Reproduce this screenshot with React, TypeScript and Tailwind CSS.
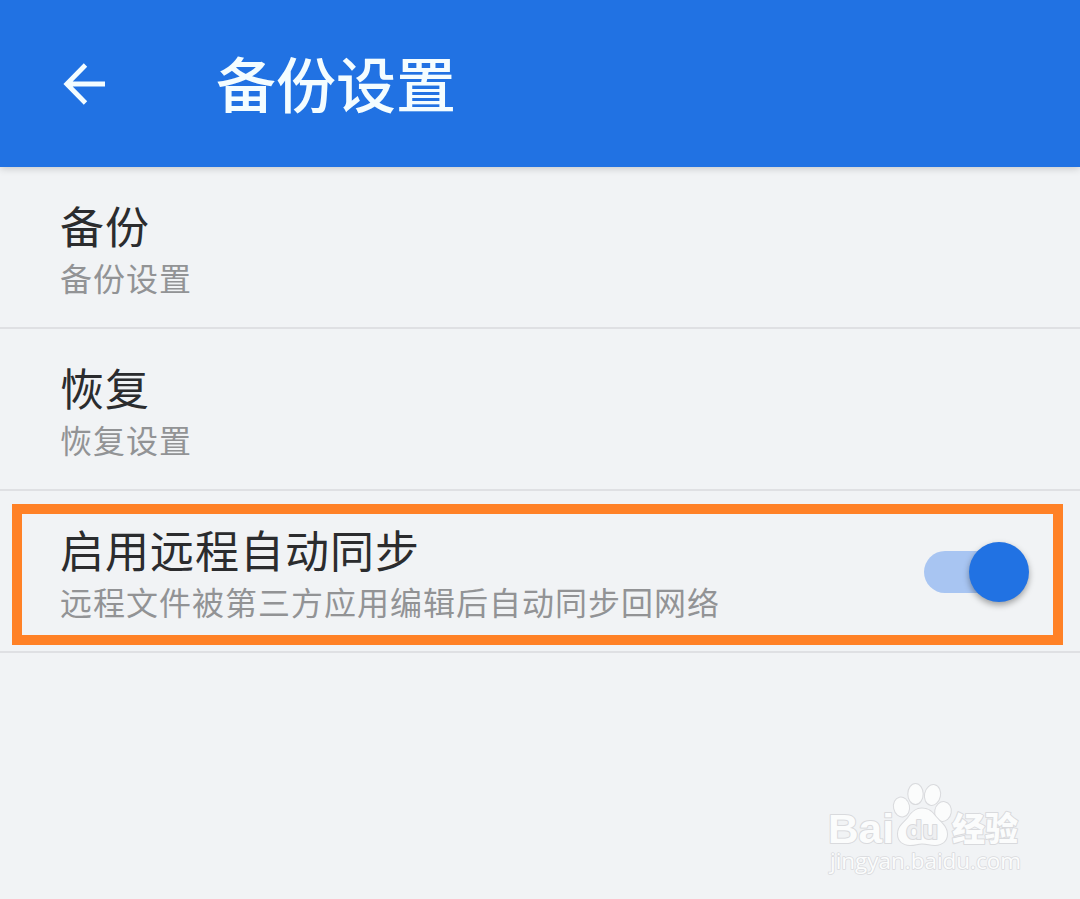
import type { ReactNode } from 'react';

type RowProps = {
  title: string;
  summary: string;
  children?: ReactNode;
};

function Header() {
  return (
    <header className="relative z-10 flex h-[167px] items-center bg-[#2172e3] pl-[63px] text-[#f4fdff] shadow-[0_1px_8px_rgba(0,0,0,0.2)]">
      <svg width="43" height="44" viewBox="0 0 43 44" fill="none" stroke="currentColor" strokeWidth="4.8">
        <path d="M42 22H5M22.5 3L3.8 22L22.5 41" />
      </svg>
      <h1 className="ml-[110px] pb-1 text-[60px] leading-[80px] font-medium">备份设置</h1>
    </header>
  );
}

function Switch() {
  return (
    <div className="mt-[2px] flex h-[60px] w-[105px] items-center">
      <div className="flex h-[42px] w-[95px] items-center rounded-full bg-[#a8c5f2] pl-[45px]">
        <div className="size-[60px] shrink-0 rounded-full bg-[#2172e3] shadow-[0_3px_6px_rgba(0,0,0,0.35)]" />
      </div>
    </div>
  );
}

function Row({ title, summary, children }: RowProps) {
  return (
    <div className="flex h-[162px] items-center justify-between border-b-2 border-[#dfe0e3] pr-[51px] pl-[60px]">
      <div className="pt-[7px]">
        <div className="text-[44px] leading-[54px] tracking-[1px] text-[#2b2c2e]">{title}</div>
        <div className="text-[32px] leading-[51px] tracking-[1px] text-[#929395]">{summary}</div>
      </div>
      {children}
    </div>
  );
}

function Watermark() {
  return (
    <svg
      className="absolute top-[770px] left-[810px]"
      width="230"
      height="129"
      viewBox="0 0 230 129"
      fill="#fbfcfc"
      stroke="#d9dadd"
      strokeWidth="2"
      strokeLinejoin="round"
      paintOrder="stroke"
    >
      <text x="18" y="72.5" fontSize="41" fontWeight="700" textLength="66" lengthAdjust="spacingAndGlyphs" className="font-['Liberation_Sans']">
        Bai
      </text>
      <ellipse cx="91.5" cy="37" rx="7.5" ry="9.5" transform="rotate(-12 91.5 37)" />
      <ellipse cx="105.5" cy="24" rx="7.2" ry="10" />
      <ellipse cx="122.5" cy="25" rx="7.5" ry="10" transform="rotate(12 122.5 25)" />
      <ellipse cx="133" cy="41.5" rx="7.8" ry="9.5" transform="rotate(10 133 41.5)" />
      <path d="M112 38.5C105 38.5 101 43.5 98 48C94 53 88 56 88 64C88 71 93 75 100 75C105 75 108 73.5 112 73.5C117 73.5 120 75 125 75C132 75 137 71 137 64C137 56 130 52 126 47C122 42 119 38.5 112 38.5Z" />
      <text x="96" y="68.5" fontSize="25" fontWeight="600" textLength="32" lengthAdjust="spacingAndGlyphs" fill="#eeeff1" className="font-[Inter,sans-serif]">
        du
      </text>
      <text x="142" y="70.5" fontSize="33" fontWeight="900" textLength="66">
        经验
      </text>
      <text x="20" y="98.5" fontSize="21" strokeWidth="1.5" textLength="191" lengthAdjust="spacingAndGlyphs" className="font-['Open_Sans']">
        jingyan.baidu.com
      </text>
    </svg>
  );
}

export default function App() {
  return (
    <main className="relative h-[899px] w-[1080px] overflow-hidden bg-[#f1f3f5] font-['Noto_Sans_CJK_SC',sans-serif]">
      <Header />
      <Row title="备份" summary="备份设置" />
      <Row title="恢复" summary="恢复设置" />
      <Row title="启用远程自动同步" summary="远程文件被第三方应用编辑后自动同步回网络">
        <Switch />
      </Row>
      {/* Highlight around the sync option */}
      <div className="absolute top-[504px] left-[12px] h-[141px] w-[1051px] border-[10px] border-[#ff8126]" />
      <Watermark />
    </main>
  );
}
